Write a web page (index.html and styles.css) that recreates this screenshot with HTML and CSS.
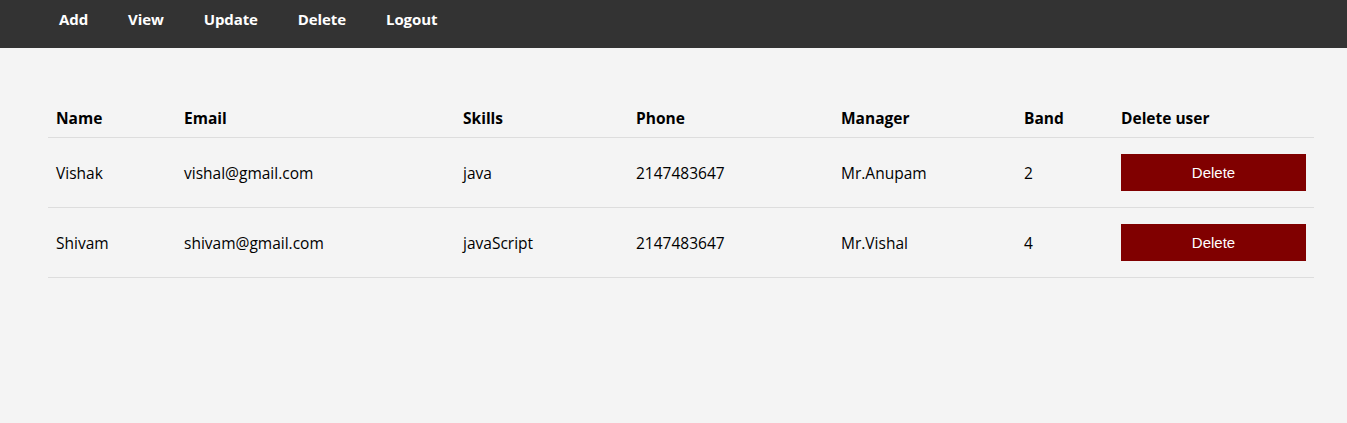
FILE: index.html
```html
<!DOCTYPE html>
<html>
<head>
<meta charset="utf-8">
<title>Users</title>
<link rel="stylesheet" href="styles.css">
</head>
<body>
<nav class="topnav">
  <ul class="menu">
    <li><a href="#">Add</a></li>
    <li><a href="#">View</a></li>
    <li><a href="#">Update</a></li>
    <li><a href="#">Delete</a></li>
    <li><a href="#">Logout</a></li>
  </ul>
</nav>
<main class="content">
  <table class="users">
    <colgroup>
      <col class="c-name"><col class="c-email"><col class="c-skills"><col class="c-phone"><col class="c-manager"><col class="c-band"><col class="c-del">
    </colgroup>
    <thead>
      <tr><th>Name</th><th>Email</th><th>Skills</th><th>Phone</th><th>Manager</th><th>Band</th><th>Delete user</th></tr>
    </thead>
    <tbody>
      <tr><td>Vishak</td><td>vishal@gmail.com</td><td>java</td><td>2147483647</td><td>Mr.Anupam</td><td>2</td><td><button class="del">Delete</button></td></tr>
      <tr><td>Shivam</td><td>shivam@gmail.com</td><td>javaScript</td><td>2147483647</td><td>Mr.Vishal</td><td>4</td><td><button class="del">Delete</button></td></tr>
    </tbody>
  </table>
</main>
</body>
</html>
```
FILE: styles.css
```css
html, body {
  margin: 0;
  padding: 0;
}
body {
  background: #f4f4f4;
  font-family: "Comic Sans MS", "Open Sans", sans-serif;
  font-size: 15.5px;
  color: #000;
}
.topnav {
  background: #333;
  height: 48px;
}
.menu {
  list-style: none;
  margin: 0;
  padding: 0 0 0 39px;
  display: flex;
  height: 48px;
  align-items: center;
}
.menu a {
  display: block;
  padding: 0 20px;
  color: #fff;
  font-weight: bold;
  font-size: 15px;
  letter-spacing: -0.1px;
  text-decoration: none;
  line-height: 40px;
  margin-top: -11px;
}
.content {
  padding: 52px 33px 0 48px;
}
.users {
  width: 1266px;
  border-collapse: collapse;
  table-layout: fixed;
}
.c-name { width: 128px; }
.c-email { width: 279px; }
.c-skills { width: 173px; }
.c-phone { width: 205px; }
.c-manager { width: 183px; }
.c-band { width: 97px; }
.c-del { width: 201px; }
.users th {
  text-align: left;
  font-weight: bold;
  padding: 8px 8px 9px;
  line-height: 20px;
  border-bottom: 1px solid #ddd;
}
.users td {
  padding: 16px 8px;
  height: 37px;
  border-bottom: 1px solid #ddd;
  white-space: nowrap;
}
.del {
  display: block;
  width: 100%;
  height: 37px;
  background: #800000;
  color: #fff;
  border: none;
  font-family: "Liberation Sans", Arial, sans-serif;
  font-size: 15px;
  cursor: pointer;
}
```
